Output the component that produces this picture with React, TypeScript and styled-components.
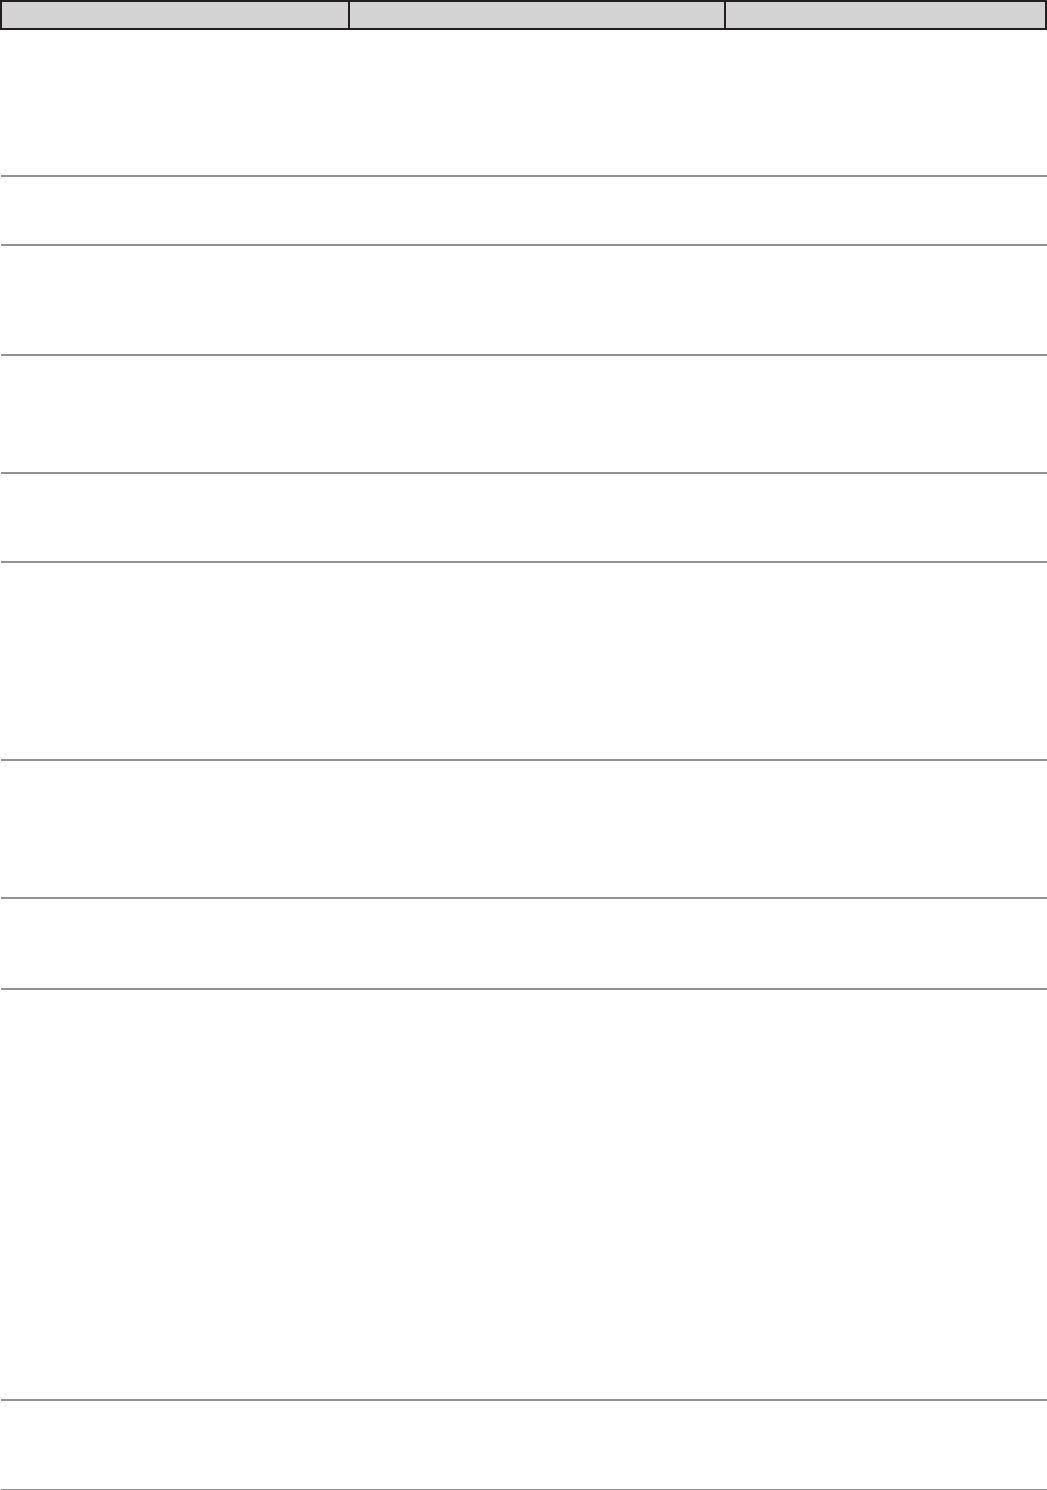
import React from 'react';
import styled, { createGlobalStyle } from 'styled-components';

const GlobalStyle = createGlobalStyle`
  html, body {
    margin: 0;
    padding: 0;
    background: #ffffff;
    font-family: "Liberation Sans", Arial, sans-serif;
  }
`;

const Sheet = styled.div`
  width: 1047px;
  display: flex;
  flex-direction: column;
`;

const HeaderRow = styled.div`
  display: grid;
  grid-template-columns: 348px 376px 1fr;
  height: 30px;
  box-sizing: border-box;
  border: 2px solid #231f20;
  background: #d3d3d3;
`;

const HeaderCell = styled.div<{ $divider?: boolean }>`
  border-right: ${(p) => (p.$divider ? '2px solid #231f20' : 'none')};
`;

const BodyRow = styled.div<{ $h: number }>`
  display: grid;
  grid-template-columns: 348px 376px 1fr;
  height: ${(p) => p.$h}px;
  box-sizing: border-box;
  margin-left: 1px;
  border-bottom: 2px solid #939393;
`;

const Cell = styled.div``;

const rowHeights = [147, 69, 110, 118, 89, 198, 138, 91, 411, 90];

export default function App() {
  return (
    <>
      <GlobalStyle />
      <Sheet>
        <HeaderRow>
          <HeaderCell $divider />
          <HeaderCell $divider />
          <HeaderCell />
        </HeaderRow>
        {rowHeights.map((h, i) => (
          <BodyRow key={i} $h={h}>
            <Cell />
            <Cell />
            <Cell />
          </BodyRow>
        ))}
      </Sheet>
    </>
  );
}
